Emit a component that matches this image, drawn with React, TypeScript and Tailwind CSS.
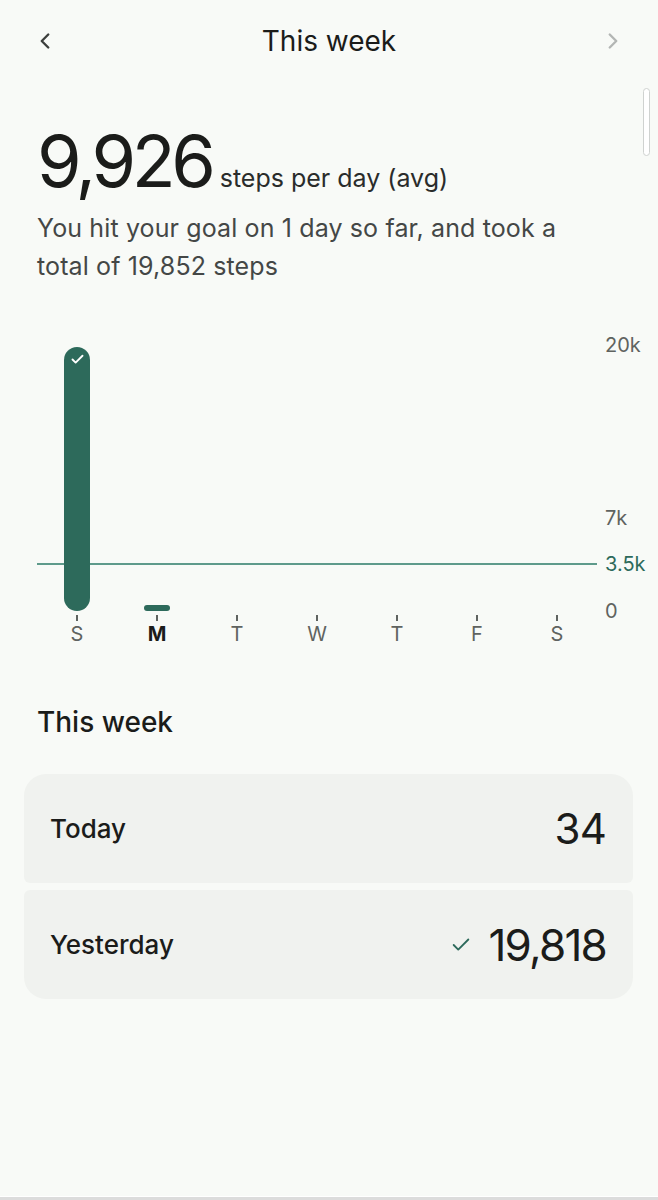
import { ChevronLeft, ChevronRight, Check } from "lucide-react";

type Day = {
  label: string;
  steps: number;
  today?: boolean;
};

const days: Day[] = [
  { label: "S", steps: 19818 },
  { label: "M", steps: 34, today: true },
  { label: "T", steps: 0 },
  { label: "W", steps: 0 },
  { label: "T", steps: 0 },
  { label: "F", steps: 0 },
  { label: "S", steps: 0 },
];

// 266px of plot height per 20k steps
const PX_PER_STEP = 266 / 20000;
const GOAL = 3500;

const axis = [
  { label: "20k", value: 20000, goal: false },
  { label: "7k", value: 7000, goal: false },
  { label: "3.5k", value: 3500, goal: true },
  { label: "0", value: 0, goal: false },
];

function Bar({ day }: { day: Day }) {
  if (day.steps === 0) return null;
  const height = Math.max(6, day.steps * PX_PER_STEP);
  const hitGoal = day.steps >= GOAL;

  return (
    <div
      className="absolute bottom-0 left-1/2 flex w-[26px] -translate-x-1/2 justify-center rounded-full bg-[#2d6a5b]"
      style={{ height }}
    >
      {hitGoal && (
        <Check
          className="mt-[5px] h-[15px] w-[15px] text-white"
          strokeWidth={3}
        />
      )}
    </div>
  );
}

function WeekChart() {
  return (
    <div className="mt-[46px] flex">
      <div className="w-[560px]">
        <div className="relative h-[280px]">
          <div
            className="absolute left-0 right-0 h-[2px] bg-[#5e9a8b]"
            style={{ bottom: GOAL * PX_PER_STEP - 1 }}
          />
          <div className="absolute inset-0 grid grid-cols-7">
            {days.map((day, index) => (
              <div key={index} className="relative">
                <Bar day={day} />
              </div>
            ))}
          </div>
        </div>
        <div className="grid grid-cols-7">
          {days.map((day, index) => (
            <div key={index} className="flex flex-col items-center">
              <div className="mt-[4px] h-[6px] w-[2px] bg-[#5f6360]" />
              <span
                className={`mt-[1px] text-[20px] leading-[24px] ${
                  day.today
                    ? "font-bold text-[#1b1c1a]"
                    : "text-[#5f6360]"
                }`}
              >
                {day.label}
              </span>
            </div>
          ))}
        </div>
      </div>
      <div className="relative h-[280px] flex-1">
        {axis.map((tick) => (
          <span
            key={tick.label}
            className={`absolute left-[8px] translate-y-1/2 text-[20px] leading-[24px] ${
              tick.goal ? "text-[#2d6a5b]" : "text-[#5f6360]"
            }`}
            style={{ bottom: tick.value * PX_PER_STEP }}
          >
            {tick.label}
          </span>
        ))}
      </div>
    </div>
  );
}

export default function App() {
  return (
    <div
      className="relative flex h-[1200px] flex-col bg-[#f8faf7] text-[#1b1c1a]"
      style={{ fontFamily: "Inter, 'Noto Sans', sans-serif" }}
    >
      <header className="flex h-[82px] items-center justify-between px-[32px]">
        <ChevronLeft className="h-[26px] w-[26px] text-[#3c3f3d]" strokeWidth={2.2} />
        <h1 className="text-[28px] font-normal">This week</h1>
        <ChevronRight className="h-[26px] w-[26px] text-[#b3b6b4]" strokeWidth={2.2} />
      </header>

      <div className="absolute right-[8px] top-[88px] h-[68px] w-[7px] rounded-full border border-[#cfd2d0] bg-white" />

      <main className="flex-1 pl-[37px] pr-[24px]">
        <div className="mt-[40px] flex items-baseline gap-[8px]">
          <span className="text-[72px] leading-[78px] tracking-[-0.06em]">9,926</span>
          <span className="text-[25px] text-[#2a2c2b]">steps per day (avg)</span>
        </div>
        <p className="mt-[9px] w-[550px] text-[25px] leading-[38px] tracking-[0.005em] text-[#444746]">
          You hit your goal on 1 day so far, and took a total of 19,852 steps
        </p>

        <WeekChart />

        <h2 className="mt-[55px] text-[28px] font-medium">This week</h2>
      </main>

      <section className="absolute left-[24px] right-[25px] top-[774px] flex flex-col gap-[7px]">
        <div className="flex h-[109px] items-center justify-between rounded-t-[22px] rounded-b-[6px] bg-[#f0f2ef] pl-[26px] pr-[27px]">
          <span className="text-[26px] font-medium">Today</span>
          <span className="text-[42px] tracking-[-0.02em]">34</span>
        </div>
        <div className="flex h-[109px] items-center justify-between rounded-t-[6px] rounded-b-[22px] bg-[#f0f2ef] pl-[26px] pr-[27px]">
          <span className="text-[26px] font-medium">Yesterday</span>
          <span className="flex items-center gap-[16px]">
            <Check className="h-[22px] w-[22px] text-[#2d6a5b]" strokeWidth={2} />
            <span className="text-[44px] tracking-[-0.04em]">19,818</span>
          </span>
        </div>
      </section>

      <div className="absolute bottom-0 left-0 right-0 h-[4px] border-t border-white bg-[#dcdcdc]" />
    </div>
  );
}
